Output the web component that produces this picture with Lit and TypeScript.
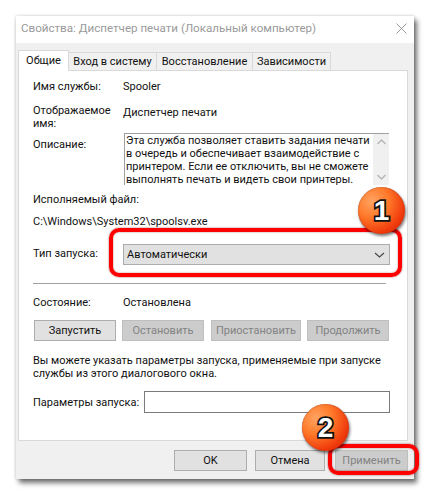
import { LitElement, html, css } from "lit";
import { customElement } from "lit/decorators.js";

@customElement("app-root")
export class AppRoot extends LitElement {
  static styles = css`
    :host { display: block; position: relative; width: 430px; height: 496px; padding: 16px 0 0 16px; box-sizing: border-box; background: #fff; overflow: hidden;
      font-family: "Roboto", "Noto Sans", sans-serif; font-size: 11px; color: #111; line-height: 13px; }
    .win { width: 398px; height: 463px; background: #f0f0f0; box-shadow: 0 0 3px rgba(0,0,0,.2), 3px 4px 5px rgba(0,0,0,.55); display: flex; flex-direction: column; box-sizing: border-box; }
    .title { height: 27px; background: #fff; display: flex; align-items: center; justify-content: space-between; padding: 0 7px 3px 5px; box-sizing: border-box; color: #9a9a9a; font-size: 11.6px; flex: none; }
    .title svg { display: block; }
    .body { padding: 7px 6px 0 2px; display: flex; flex-direction: column; flex: none; }
    .tabs { display: flex; height: 20px; align-items: flex-end; position: relative; z-index: 1; }
    .tab { height: 18px; border: 1px solid #d9d9d9; border-bottom: none; border-left: none; box-sizing: border-box; background: #f0f0f0; display: flex; align-items: center; justify-content: center; }
    .tab.first { border-left: 1px solid #d9d9d9; height: 21px; background: #fff; margin-bottom: -1px; align-items: flex-start; padding-top: 3px; }
    .panel { height: 371px; box-sizing: border-box; background: #fff; border: 1px solid #d9d9d9; padding: 0 17px 0 14px; display: flex; flex-direction: column; }
    .row { display: grid; grid-template-columns: 90px 1fr; align-items: start; }
    .desc { height: 52px; border-top: 1px solid #a0a0a0; border-left: 1px solid #a0a0a0; display: flex; box-sizing: border-box; width: 265px; padding-left: 1px; margin-left: 1px; }
    .desc .txt { flex: 1; white-space: nowrap; }
    .sb { width: 16px; background: #f0f0f0; display: flex; flex-direction: column; justify-content: space-between; align-items: center; padding: 5px 0 5px; box-sizing: border-box; flex: none; }
    .select { height: 21px; width: 267px; border: 1px solid #acacac; background: #e1e1e1; box-sizing: border-box; display: flex; align-items: center; justify-content: space-between; padding: 0 4px 0 3px; }
    hr { margin: 0; border: none; border-top: 1px solid #a0a0a0; height: 0; width: 353px; }
    .btns { display: flex; gap: 6px; margin-left: 1px; }
    .btn { height: 21px; box-sizing: border-box; border: 1px solid #adadad; background: #e1e1e1; display: flex; align-items: center; justify-content: center; }
    .btn.off { background: #cccccc; border-color: #bfbfbf; color: #838383; }
    .params { display: flex; align-items: center; white-space: nowrap; }
    .params span { width: 111px; flex: none; }
    .input { height: 22px; width: 246px; border: 1px solid #7a7a7a; box-sizing: border-box; background: #fff; flex: none; }
    .foot { display: flex; padding: 9px 0 0 0; justify-content: flex-end; gap: 8px; }
    .foot .btn { width: 73px; }
    .ring { position: absolute; border: 4px solid #f00; border-radius: 10px; box-sizing: border-box; box-shadow: 0 0 2px rgba(120,0,0,.7), inset 0 0 2px rgba(120,0,0,.5); }
    .badge { position: absolute; width: 47px; height: 47px; border-radius: 50%; background: radial-gradient(circle at 30% 30%, #ffa464 0%, #ff7a2a 35%, #f03a0c 70%, #c82300 100%); box-shadow: 1px 2px 3px rgba(0,0,0,.55), inset 0 0 1px rgba(90,10,0,.8); display: flex; align-items: center; justify-content: center;
      font-family: "Liberation Sans", sans-serif; font-weight: 700; font-size: 28px; color: #fff; -webkit-text-stroke: 3.5px #111; paint-order: stroke fill; }
  `;

  render() {
    const w = (px: number) => `width:${px}px`;
    return html`
      <div class="win">
        <div class="title">
          <span>Свойства: Диспетчер печати (Локальный компьютер)</span>
          <svg width="11" height="11" viewBox="0 0 11 11"><path d="M.5.5l10 10M10.5.5l-10 10" stroke="#9a9a9a" fill="none"/></svg>
        </div>
        <div class="body">
          <div class="tabs">
            <div class="tab first" style=${w(51)}>Общие</div>
            <div class="tab" style=${w(88)}>Вход в систему</div>
            <div class="tab" style=${w(96)}>Восстановление</div>
            <div class="tab" style=${w(78)}>Зависимости</div>
          </div>
          <div class="panel">
            <div class="row" style="margin-top:9px"><span>Имя службы:</span><span>Spooler</span></div>
            <div class="row" style="margin-top:11px"><span>Отображаемое<br />имя:</span><span style="margin-top:2px">Диспетчер печати</span></div>
            <div class="row" style="margin-top:3px"><span style="margin-top:5px">Описание:</span>
              <div class="desc">
                <div class="txt">Эта служба позволяет ставить задания печати<br />в очередь и обеспечивает взаимодействие с<br />принтером. Если ее отключить, вы не сможете<br />выполнять печать и видеть свои принтеры.</div>
                <div class="sb">
                  <svg width="9" height="6" viewBox="0 0 9 6"><path d="M.5 5L4.5 1l4 4" stroke="#b5b5b5" stroke-width="1.4" fill="none"/></svg>
                  <svg width="9" height="6" viewBox="0 0 9 6"><path d="M.5 1L4.5 5l4-4" stroke="#b5b5b5" stroke-width="1.4" fill="none"/></svg>
                </div>
              </div>
            </div>
            <div style="margin-top:8px">Исполняемый файл:</div>
            <div style="margin-top:9px">C:\\Windows\\System32\\spoolsv.exe</div>
            <div class="row" style="margin-top:16px">
              <span style="margin-top:3px">Тип запуска:</span>
              <div class="select"><span>Автоматически</span>
                <svg width="11" height="6" viewBox="0 0 11 6"><path d="M1 1l4.5 4L10 1" stroke="#444" stroke-width="1.1" fill="none"/></svg>
              </div>
            </div>
            <hr style="margin-top:18px" />
            <div class="row" style="margin-top:12px"><span>Состояние:</span><span>Остановлена</span></div>
            <div class="btns" style="margin-top:11px">
              <div class="btn" style=${w(82)}>Запустить</div>
              <div class="btn off" style=${w(82)}>Остановить</div>
              <div class="btn off" style="width:90px;margin-left:1px">Приостановить</div>
              <div class="btn off" style=${w(82)}>Продолжить</div>
            </div>
            <div style="margin-top:13px;white-space:nowrap">Вы можете указать параметры запуска, применяемые при запуске<br />службы из этого диалогового окна.</div>
            <div class="params" style="margin-top:11px"><span>Параметры запуска:</span><div class="input"></div></div>
          </div>
          <div class="foot">
            <div class="btn">OK</div>
            <div class="btn" style="width:70px">Отмена</div>
            <div class="btn off" style="margin-left:2px">Применить</div>
          </div>
        </div>
      </div>
      <div class="ring" style="left:109px;top:228px;width:293px;height:49px"></div>
      <div class="ring" style="left:328px;top:444px;width:91px;height:31px"></div>
      <div class="badge" style="left:358px;top:187px">1</div>
      <div class="badge" style="left:302px;top:404px">2</div>
    `;
  }
}
